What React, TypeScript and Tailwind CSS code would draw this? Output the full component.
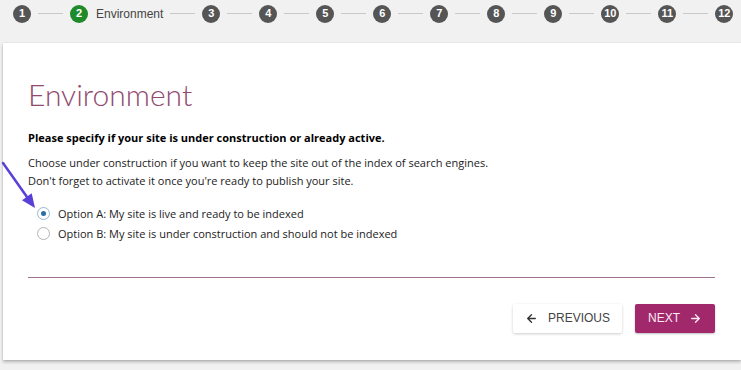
import React, { useState } from 'react';

const steps = ['1', '2', '3', '4', '5', '6', '7', '8', '9', '10', '11', '12'];

const Stepper: React.FC = () => (
  <div className="flex h-[27px] items-center pl-[13px] font-['Liberation_Sans',Arial,sans-serif]">
    {steps.map((s, i) => {
      const active = s === '2';
      return (
        <React.Fragment key={s}>
          {i > 0 && <div className="mx-[7px] h-px w-[25px] bg-[#c8c8c8]" />}
          <div
            className={
              'flex h-[18px] w-[18px] shrink-0 items-center justify-center rounded-full text-[11px] font-bold text-white ' +
              (active ? 'bg-[#1f8a2a]' : 'bg-[#555555]')
            }
          >
            {s}
          </div>
          {active && <span className="ml-[8px] text-[12px] text-[#444]">Environment</span>}
        </React.Fragment>
      );
    })}
  </div>
);

const Radio: React.FC<{ checked: boolean; label: string; onClick: () => void }> = ({ checked, label, onClick }) => (
  <label onClick={onClick} className="flex h-[20px] cursor-pointer items-center leading-none">
    <span
      className={
        'flex h-[13px] w-[13px] items-center justify-center rounded-full border bg-white ' +
        (checked ? 'border-[#9ab7cf]' : 'border-[#b5b5b5]')
      }
    >
      {checked && <span className="h-[5px] w-[5px] rounded-full bg-[#2a6fa8]" />}
    </span>
    <span className="ml-[8px]">{label}</span>
  </label>
);

export default function App() {
  const [option, setOption] = useState<'a' | 'b'>('a');

  return (
    <div className="relative h-[370px] w-[741px] overflow-hidden bg-[#f1f1f1]">
      <Stepper />
      <div className="ml-[3px] mt-[16px] h-[317px] bg-white pl-[25px] pr-[26px] pt-[31px] shadow-[0_2px_3px_rgba(0,0,0,0.25),0_0_1px_rgba(0,0,0,0.2)] font-['Open_Sans',sans-serif] text-[11px] text-[#222]">
        <h1 className="font-['Lato',sans-serif] text-[30px] font-light leading-[40px] text-[#8f4a6e]">Environment</h1>
        <p className="mt-[16px] font-bold text-black">Please specify if your site is under construction or already active.</p>
        <p className="mt-[7px] leading-[18px]">
          Choose under construction if you want to keep the site out of the index of search engines.
          <br />
          Don't forget to activate it once you're ready to publish your site.
        </p>
        <div className="mt-[14px] pl-[9px]">
          <Radio checked={option === 'a'} label="Option A: My site is live and ready to be indexed" onClick={() => setOption('a')} />
          <Radio checked={option === 'b'} label="Option B: My site is under construction and should not be indexed" onClick={() => setOption('b')} />
        </div>
        <div className="mt-[33px] h-px bg-[#9e7290]" />
        <div className="mt-[26px] flex justify-end gap-[13px] font-['Liberation_Sans',Arial,sans-serif] text-[12px]">
          <button className="flex h-[29px] w-[109px] items-center justify-center gap-[10px] rounded-[2px] bg-white text-[#444] shadow-[0_1px_3px_rgba(0,0,0,0.2)]">
            <svg width="13" height="13" viewBox="0 0 24 24" fill="none" stroke="#333" strokeWidth="2.5" strokeLinecap="round" strokeLinejoin="round">
              <path d="M19 12H5M12 19l-7-7 7-7" />
            </svg>
            PREVIOUS
          </button>
          <button className="flex h-[29px] w-[80px] items-center justify-center gap-[9px] rounded-[2px] bg-[#a1286b] text-[#fbe9f3] shadow-[0_1px_2px_rgba(0,0,0,0.25)]">
            NEXT
            <svg width="13" height="13" viewBox="0 0 24 24" fill="none" stroke="#fbe9f3" strokeWidth="2.5" strokeLinecap="round" strokeLinejoin="round">
              <path d="M5 12h14M12 5l7 7-7 7" />
            </svg>
          </button>
        </div>
      </div>
      {/* annotation arrow */}
      <svg className="absolute left-0 top-[160px]" width="40" height="52" viewBox="0 0 40 52">
        <path d="M3 3 L27 37" stroke="#5a3fd8" strokeWidth="2.5" strokeLinecap="round" />
        <path d="M35 48 L31.7 33.2 L22 40.2 Z" fill="#5a3fd8" />
      </svg>
    </div>
  );
}
